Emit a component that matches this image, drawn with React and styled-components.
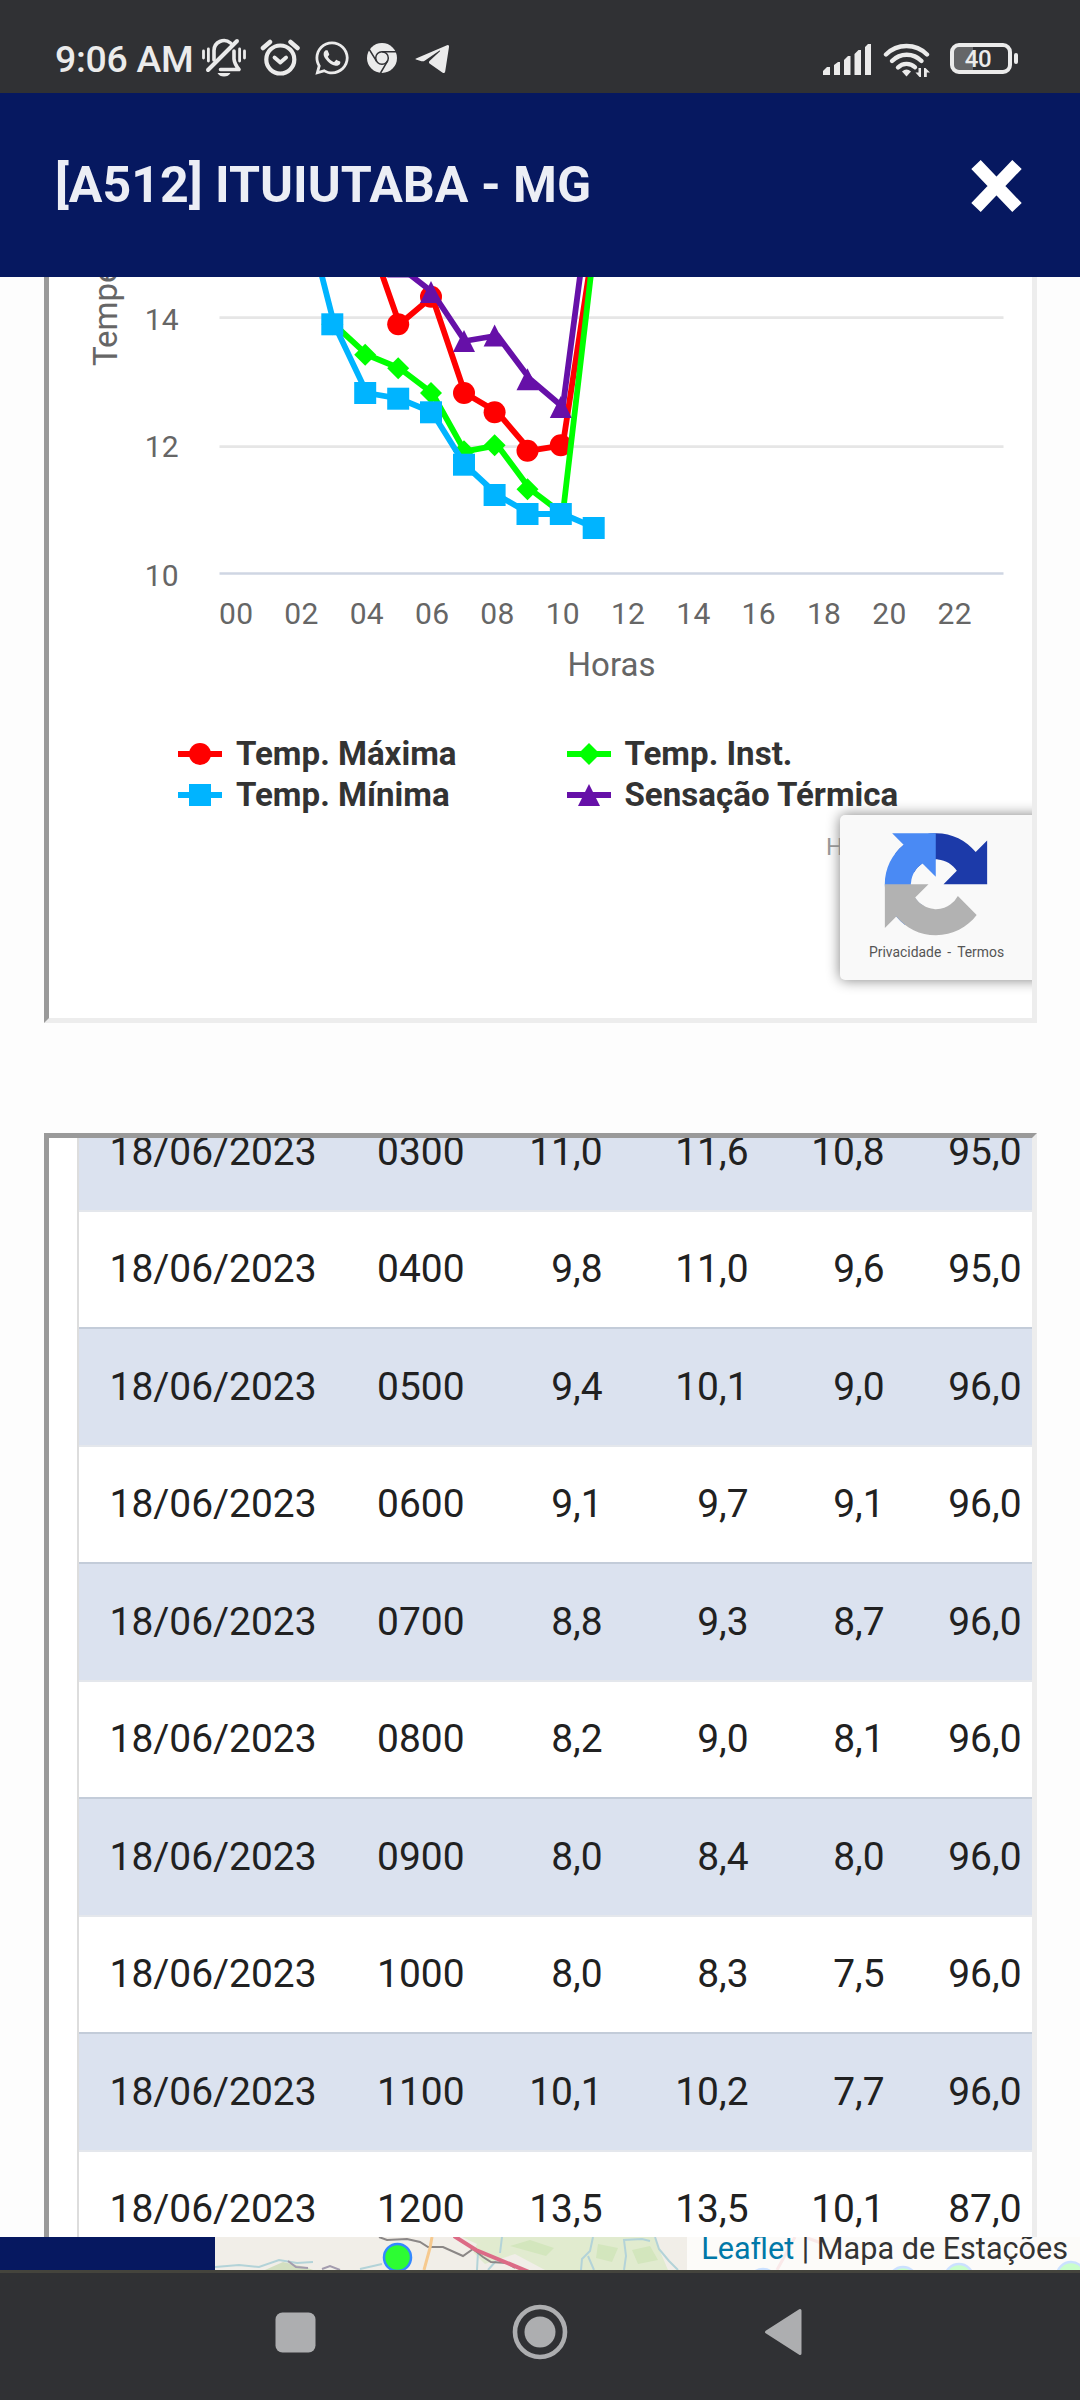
import React from "react"
import styled, { createGlobalStyle } from "styled-components"
import { FaWhatsapp } from "react-icons/fa"

const RED = "#ff0000"
const GREEN = "#00ff00"
const BLUE = "#00b4ff"
const PURPLE = "#6610a8"

const GlobalStyle = createGlobalStyle`
  * {
    box-sizing: border-box;
  }
  body {
    margin: 0;
    background: #fdfdfd;
    font-family: Roboto, "Open Sans", sans-serif;
  }
`

const Screen = styled.div`
  width: 1080px;
  height: 2400px;
  display: flex;
  flex-direction: column;
  overflow: hidden;
`

/* status bar */

const StatusBar = styled.header`
  flex: none;
  height: 93px;
  padding: 23px 62px 0 55px;
  display: flex;
  align-items: center;
  justify-content: space-between;
  background: #303134;
  color: #ebebeb;
`
const StatusGroup = styled.div`
  display: flex;
  align-items: center;
`
const Clock = styled.span`
  width: 147px;
  padding-top: 2px;
  font-size: 37.4px;
  line-height: 44px;
  font-weight: 500;
  letter-spacing: -0.3px;
  white-space: nowrap;
`
const StatusIcon = styled.svg`
  display: block;
  width: ${p => p.$w}px;
  height: 40px;
  margin-left: ${p => p.$gap || 0}px;
  fill: currentColor;
`
const WhatsApp = styled(FaWhatsapp)`
  width: 38px;
  height: 38px;
  margin: -1px 0 0 13px;
`
const Battery = styled.div`
  width: 62px;
  height: 31px;
  margin-left: 20px;
  border: 4px solid #ebebeb;
  border-radius: 9px;
  display: flex;
  align-items: center;
  justify-content: center;
  padding: 2px 6px 0 0;
  background: linear-gradient(90deg, #656668 19px, #303134 19px);
  font-size: 24px;
  line-height: 24px;
  letter-spacing: -0.5px;
  font-weight: 500;
`
const BatteryTip = styled.div`
  width: 4px;
  height: 11px;
  margin-left: 2px;
  border-radius: 2px;
  background: #ebebeb;
`

/* modal header */

const TitleBar = styled.div`
  flex: none;
  height: 184px;
  padding: 0 57px 0 55px;
  display: flex;
  align-items: center;
  justify-content: space-between;
  background: #061860;
`
const Title = styled.h1`
  margin: 0;
  font-size: 50.1px;
  line-height: 60px;
  font-weight: 700;
  color: #eceef5;
  white-space: nowrap;
`
const CloseButton = styled.button`
  padding: 0;
  margin-top: 2px;
  border: 0;
  background: none;
  line-height: 0;
`

/* framed panels */

const Content = styled.main`
  flex: none;
  height: 1960px;
  padding: 0 43px 0 44px;
  display: flex;
  flex-direction: column;
  overflow: hidden;
`
const Frame = styled.section`
  flex: none;
  border: 5px solid #ededed;
  border-left-color: #9a9a9a;
  border-top-color: #9a9a9a;
  background: #fff;
  overflow: hidden;
`
const ChartFrame = styled(Frame)`
  position: relative;
  height: 746px;
  border-top: 0;
`
const TableFrame = styled(Frame)`
  height: 1300px;
  margin-top: 110px;
  padding-left: 28px;
`
const Plot = styled.svg`
  display: block;
`
const Legend = styled.div`
  margin-top: 19px;
  padding-left: 129px;
  display: grid;
  grid-template-columns: 388.5px 1fr;
  grid-auto-rows: 41.3px;
`
const LegendItem = styled.div`
  display: flex;
  align-items: center;
  gap: 14px;
  font-size: 33.1px;
  line-height: 41px;
  font-weight: 700;
  color: #333;
  white-space: nowrap;
`
const Credits = styled.div`
  margin: 16px 0 0 777px;
  font-size: 24px;
  line-height: 30px;
  color: #999;
`
const Captcha = styled.aside`
  position: absolute;
  top: 538px;
  left: 791px;
  width: 256px;
  height: 165px;
  padding: 18px 0 0 16px;
  border-radius: 5px;
  background: #f9f9f9;
  box-shadow: 0 0 14px #808080;
`
const CaptchaLinks = styled.div`
  display: flex;
  gap: 6px;
  margin: 4px 0 0 13px;
  font-size: 13.9px;
  line-height: 20px;
  color: #555;
  white-space: nowrap;
`

const Table = styled.div`
  width: 1000px;
  margin-top: -46px;
  border-left: 2px solid #ddd;
`
const Row = styled.div`
  height: 117.5px;
  display: grid;
  grid-template-columns: 236.5px 148px 138px 146px 136px 137px;
  padding-left: 1px;
  align-items: center;
  text-align: right;
  font-size: 38.9px;
  line-height: 46px;
  color: #212121;
  background: ${p => (p.$odd ? "#dbe2ef" : "#fff")};
  border-top: 2px solid ${p => (p.$odd ? "#c3ccd9" : "#e4e7ec")};
`

/* map and navigation bar */

const MapStrip = styled.footer`
  flex: none;
  height: 36px;
  display: flex;
  background: #f1eee8;
  border-bottom: 3px solid #44443d;
`
const Sidebar = styled.div`
  flex: none;
  width: 215px;
  background: #061860;
`
const MapView = styled.div`
  flex: 1;
  position: relative;
  overflow: hidden;
`
const Attribution = styled.div`
  position: absolute;
  top: 0;
  right: 0;
  width: 393px;
  height: 33px;
  padding-right: 12px;
  text-align: right;
  font-size: 30.6px;
  line-height: 23px;
  color: #333;
  background: rgba(255, 255, 255, 0.75);
  white-space: nowrap;
`
const MapLink = styled.a`
  color: #0078a8;
`
const NavBar = styled.nav`
  flex: none;
  height: 127px;
  display: flex;
  align-items: center;
  justify-content: space-between;
  padding: 0 277px 9px 275px;
  background: #303134;
  color: #adaeb0;
`

const gridX = i => 236.2 + 32.66 * i
const markerX = [0, 0, 0, 332.3, 365.2, 398.2, 431, 464, 494.6, 527.5, 560.8, 593.7]

const series = [
  {
    name: "Temp. Máxima",
    color: RED,
    shape: "circle",
    points: [[4, 231], [5, 324.3], [6, 296.7], [7, 393], [8, 412.3], [9, 450.7], [10, 445.3], [11, 231]],
  },
  {
    name: "Temp. Inst.",
    color: GREEN,
    shape: "diamond",
    points: [[3, 324.3], [4, 354.7], [5, 368.3], [6, 393], [7, 451.3], [8, 445.3], [9, 489.3], [10, 514], [11, 236]],
  },
  {
    name: "Temp. Mínima",
    color: BLUE,
    shape: "square",
    points: [[2, 196], [3, 324.3], [4, 393], [5, 398.7], [6, 412.3], [7, 464.7], [8, 495], [9, 514], [10, 514], [11, 528]],
  },
  {
    name: "Sensação Térmica",
    color: PURPLE,
    shape: "triangle",
    points: [[5, 266.5], [6, 292], [7, 341], [8, 335.5], [9, 379.3], [10, 407], [11, 159]],
  },
]

const Marker = ({ shape, x, y, color }) => {
  switch (shape) {
    case "circle":
      return <circle cx={x} cy={y} r="11" fill={color} />
    case "square":
      return <rect x={x - 11} y={y - 11} width="22" height="22" fill={color} />
    case "diamond":
      return <path d={`M${x} ${y - 11}l11 11-11 11-11-11z`} fill={color} />
    default:
      return <path d={`M${x} ${y - 11}l11 22h-22z`} fill={color} />
  }
}

const Chart = () => (
  <Plot width="983" height="437" viewBox="49 277 983 437">
    <path d="M219.5 317.7H1003.5M219.5 446.7H1003.5" stroke="#e6e6e6" strokeWidth="2.7" />
    <path d="M219.5 573.5H1003.5" stroke="#cfd6e3" strokeWidth="2.7" />
    <g fontSize="30" fill="#666" letterSpacing="0.3">
      <text x="179" y="330" textAnchor="end">14</text>
      <text x="179" y="457" textAnchor="end">12</text>
      <text x="179" y="585.5" textAnchor="end">10</text>
      {[...Array(12)].map((_, i) => (
        <text key={i} x={gridX(i * 2)} y="623.7" textAnchor="middle">
          {String(i * 2).padStart(2, "0")}
        </text>
      ))}
    </g>
    <g fontSize="33" fill="#666">
      <text x="611.5" y="675.5" textAnchor="middle">Horas</text>
      <text transform="translate(117 366) rotate(-90)">Temperatura (°C)</text>
    </g>
    {series.map(s => (
      <g key={s.name}>
        <polyline
          points={s.points.map(([h, y]) => `${gridX(h)},${y}`).join(" ")}
          fill="none"
          stroke={s.color}
          strokeWidth="5.8"
          strokeLinejoin="round"
        />
        {s.points
          .filter(([h, y]) => y > 260)
          .map(([h, y]) => (
            <Marker key={h} shape={s.shape} x={markerX[h]} y={y} color={s.color} />
          ))}
      </g>
    ))}
  </Plot>
)

const CaptchaLogo = () => (
  <Plot width="160" height="105" viewBox="-18 0 100 65.6">
    <path
      fill="#1c3aa9"
      d="M64 31.955l-.033-1.37V4.687l-7.16 7.16C50.948 4.674 42.033.093 32.05.093c-10.4 0-19.622 4.96-25.458 12.64l11.736 11.86a15.55 15.55 0 0 1 4.754-5.334c2.05-1.6 4.952-2.906 8.968-2.906.485 0 .86.057 1.135.163 4.976.393 9.288 3.14 11.828 7.124l-8.307 8.307L64 31.953"
    />
    <path
      fill="#4a8af4"
      d="M31.862.094l-1.37.033H4.594l7.16 7.16C4.58 13.147 0 22.06 0 32.046c0 10.4 4.96 19.622 12.64 25.458L24.5 45.768a15.55 15.55 0 0 1-5.334-4.754c-1.6-2.05-2.906-4.952-2.906-8.968 0-.485.057-.86.163-1.135.393-4.976 3.14-9.288 7.124-11.828l8.307 8.307L31.86.095"
    />
    <path
      fill="#b2b2b2"
      d="M.001 32.045l.033 1.37v25.898l7.16-7.16c5.86 7.173 14.774 11.754 24.76 11.754 10.4 0 19.622-4.96 25.458-12.64l-11.736-11.86a15.55 15.55 0 0 1-4.754 5.334c-2.05 1.6-4.952 2.906-8.968 2.906-.485 0-.86-.057-1.135-.163-4.976-.393-9.288-3.14-11.828-7.124l8.307-8.307c-10.522.04-22.4.066-27.295-.005"
    />
  </Plot>
)

const readings = [
  ["18/06/2023", "0300", "11,0", "11,6", "10,8", "95,0"],
  ["18/06/2023", "0400", "9,8", "11,0", "9,6", "95,0"],
  ["18/06/2023", "0500", "9,4", "10,1", "9,0", "96,0"],
  ["18/06/2023", "0600", "9,1", "9,7", "9,1", "96,0"],
  ["18/06/2023", "0700", "8,8", "9,3", "8,7", "96,0"],
  ["18/06/2023", "0800", "8,2", "9,0", "8,1", "96,0"],
  ["18/06/2023", "0900", "8,0", "8,4", "8,0", "96,0"],
  ["18/06/2023", "1000", "8,0", "8,3", "7,5", "96,0"],
  ["18/06/2023", "1100", "10,1", "10,2", "7,7", "96,0"],
  ["18/06/2023", "1200", "13,5", "13,5", "10,1", "87,0"],
]

const Status = () => (
  <StatusBar>
    <StatusGroup>
      <Clock>9:06 AM</Clock>
      {/* muted bell with vibration bars */}
      <StatusIcon $w={44} viewBox="202 38 44 40">
        <g fill="none" stroke="currentColor" strokeLinecap="round">
          <path d="M203.5 51v7M208.4 49v12M239.6 49v12M244.5 51v7" strokeWidth="2.8" />
          <path d="M214 60V50.5A10 10 0 0 1 230.5 43" strokeWidth="3.6" />
          <path d="M234 51v8q.5 5 5 10.5H220.5" strokeWidth="3.6" strokeLinejoin="round" />
          <path d="M237 41L208 70" strokeWidth="4" />
        </g>
        <path d="M217.5 73h13q-2 3.5-6.5 3.5t-6.5-3.5z" />
      </StatusIcon>
      <StatusIcon $w={40} $gap={14} viewBox="260 37 40 40">
        <g fill="none" stroke="currentColor">
          <circle cx="280.3" cy="58.5" r="14" strokeWidth="4.2" />
          <path d="M263 47l7-6M290.5 41l7 6" strokeWidth="4.5" strokeLinecap="round" />
          <path d="M274.5 56.5l5.8 5 5.8-5" strokeWidth="3.8" strokeLinecap="round" strokeLinejoin="round" />
        </g>
      </StatusIcon>
      <WhatsApp />
      <StatusIcon $w={30} $gap={16} viewBox="367 37 30 40">
        <circle cx="382" cy="57" r="15" />
        <g fill="none" stroke="#303134" strokeWidth="1.5">
          <circle cx="382" cy="57" r="6.3" />
          <path d="M382 50.7H396M376.5 60.2L369 48M387.5 60.2L380.5 72" />
        </g>
      </StatusIcon>
      <StatusIcon $w={34} $gap={18} viewBox="415 37 34 40">
        <path
          d="M416 57.5L447 44.2Q449.2 43.6 449 46L445.2 70.5Q444.6 73 442.3 71.5L429.5 62.5Q428.3 61.3 429.5 60L440 50.2Q440.5 49.3 439.2 49.7L425 59.5Q423.5 60.7 421.5 60.2L416 58.5Q414.9 58 416 57.5z"
        />
      </StatusIcon>
    </StatusGroup>
    <StatusGroup>
      <StatusIcon $w={48} viewBox="823 37 48 40">
        <path d="M823 74v-4l4-4h3v8zM834 74V64l4-3h2v13zM844 74V59l4-4h2.5v19zM854.5 74V53l4-4h2.5v25zM865 74V46l3-3h3v31z" />
      </StatusIcon>
      <StatusIcon $w={47} $gap={12} viewBox="883 37 47 40">
        <g fill="none" stroke="currentColor" strokeWidth="4.4" strokeLinecap="round">
          <path d="M886 53.5a29 29 0 0 1 41 0" />
          <path d="M892 60a20.5 20.5 0 0 1 29.5 0" />
          <path d="M898 66.5a12 12 0 0 1 17-.2" />
        </g>
        <path d="M902 70.5q4.5-4 9 0L906.5 75.5z" />
        <path d="M918.5 67h2.5v9h-1.5l-4-4.5h3zM924 76V67h1.5l4.5 4.5h-3.2V76z" />
      </StatusIcon>
      <Battery>40</Battery>
      <BatteryTip />
    </StatusGroup>
  </StatusBar>
)

export default () => (
  <Screen>
    <GlobalStyle />
    <Status />
    <TitleBar>
      <Title>[A512] ITUIUTABA - MG</Title>
      <CloseButton aria-label="Fechar">
        <svg width="53" height="54" viewBox="0 0 53 54">
          <path d="M6 5.5L47 48.5M47 5.5L6 48.5" stroke="#fff" strokeWidth="13" />
        </svg>
      </CloseButton>
    </TitleBar>
    <Content>
      <ChartFrame>
        <Chart />
        <Legend>
          {series.map(s => (
            <LegendItem key={s.name}>
              <svg width="44" height="24" viewBox="-22 -12 44 24">
                <path d="M-22 0H22" stroke={s.color} strokeWidth="5.8" />
                <Marker shape={s.shape} x={0} y={0} color={s.color} />
              </svg>
              {s.name}
            </LegendItem>
          ))}
        </Legend>
        <Credits>Highcharts.com</Credits>
        <Captcha>
          <CaptchaLogo />
          <CaptchaLinks>
            <span>Privacidade</span>
            <span>-</span>
            <span>Termos</span>
          </CaptchaLinks>
        </Captcha>
      </ChartFrame>
      <TableFrame>
        <Table>
          {readings.map((cells, i) => (
            <Row key={cells[1]} $odd={i % 2 === 0}>
              {cells.map((cell, j) => (
                <span key={j}>{cell}</span>
              ))}
            </Row>
          ))}
        </Table>
      </TableFrame>
    </Content>
    <MapStrip>
      <Sidebar />
      <MapView>
        <svg width="865" height="33" viewBox="215 2237 865 33">
          <path d="M462 2237h192l14 33H545l-30-16-30 10-12-12 4-8z" fill="#e1ebcf" />
          <path d="M510 2246l20-6 24 8-8 8zM598 2244l20 4-6 14-16-4zM632 2250l18-4 8 14-20 4z" fill="#d3e6bd" />
          <path d="M265 2270l18-8 22 5 8 3z" fill="#d3dfc0" />
          <g fill="none" stroke="#b3d3d8" strokeWidth="2">
            <path d="M215 2267l24-2 20 2 20-7 18 3 16-1M360 2269l22-5M502 2237l-2 16M478 2252l-1 18M496 2261l-8 9M593 2237l-3 14-8 8-1 11M588 2256l6 14M624 2270l2-14-2-16 18-1 8 2M655 2237l4 12 10 12 9 9" />
          </g>
          <path d="M379 2237l8 3 20-1 13 3 8 5 15 0 20 9 10-7 10 8 8 5 16 1 8 5" fill="none" stroke="#8b8786" strokeWidth="2" />
          <path d="M288 2261l8 6 12 1M322 2269l8-3 10 4" fill="none" stroke="#a39cae" strokeWidth="2" />
          <path d="M432 2237l-2 11-6 22" fill="none" stroke="#f6c98e" strokeWidth="3" />
          <path d="M454 2236l22 14 53 22" fill="none" stroke="#dc6b86" strokeWidth="4" />
          <path d="M795 2237l-18 33M805 2237l16 6" fill="none" stroke="#e9a8a8" strokeWidth="3" />
          <g fill="#2dfc33" stroke="#3388ff" strokeWidth="2.5">
            <circle cx="397.5" cy="2257.5" r="13.5" />
            <circle cx="763" cy="2283" r="14" />
            <circle cx="903" cy="2281" r="14" />
            <circle cx="959" cy="2278" r="14" />
            <circle cx="1071" cy="2276" r="14" />
          </g>
        </svg>
        <Attribution>
          <MapLink>Leaflet</MapLink> | Mapa de Estações
        </Attribution>
      </MapView>
    </MapStrip>
    <NavBar>
      <svg width="41" height="41">
        <rect x="0.5" y="0.5" width="40" height="40" rx="7" fill="currentColor" />
      </svg>
      <svg width="56" height="56" viewBox="-28 -28 56 56">
        <circle r="25" fill="none" stroke="currentColor" strokeWidth="4.6" />
        <circle r="15.5" fill="currentColor" />
      </svg>
      <svg width="39" height="48" viewBox="0 0 39 48">
        <path
          d="M2.5 24L36 2.5V45.5z"
          fill="currentColor"
          stroke="currentColor"
          strokeWidth="3"
          strokeLinejoin="round"
        />
      </svg>
    </NavBar>
  </Screen>
)
